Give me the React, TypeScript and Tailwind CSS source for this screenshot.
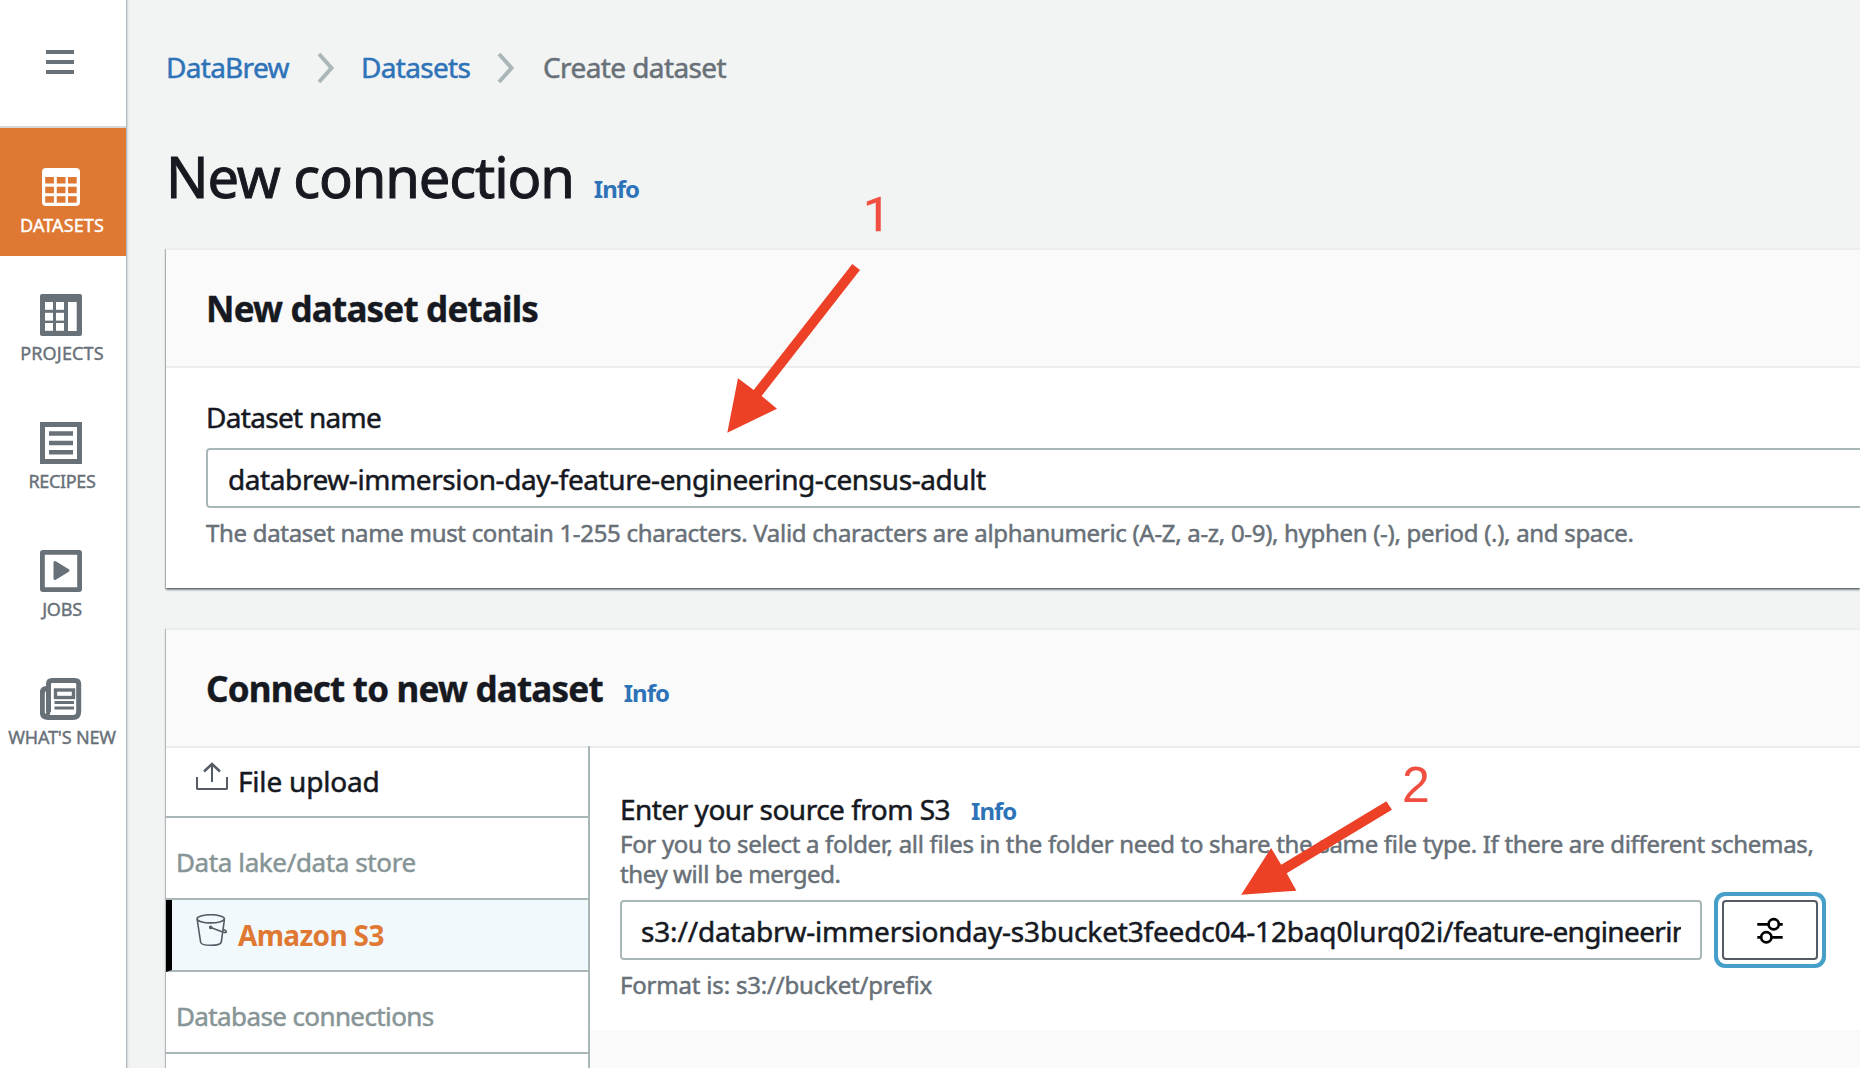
import type { ReactNode } from 'react'

const ink = 'text-[#16191f]'
const hint = 'text-[#687078] [-webkit-text-stroke:0.5px]'

function NavItem({ label, spacing, active, children }: { label: string; spacing: string; active?: boolean; children: ReactNode }) {
  return (
    <a className={`flex h-32 w-full flex-col items-center pt-[38px] ${active ? 'bg-[#df7832] text-white' : 'text-[#687078]'}`}>
      <span className="mr-[4px] flex h-[42px] w-[42px] items-center justify-center">{children}</span>
      <span className={`mr-[2px] mt-[3px] whitespace-nowrap text-[18px] leading-[28px] [-webkit-text-stroke:0.4px] ${spacing}`}>{label}</span>
    </a>
  )
}

function Info({ className }: { className: string }) {
  return <a className={`text-[24px] font-bold tracking-[-1px] text-[#2e73b8] ${className}`}>Info</a>
}

function Chevron({ className }: { className: string }) {
  return (
    <svg className={className} width="18" height="32" viewBox="0 0 18 32" fill="none">
      <path d="M2 2 L14.5 16 L2 30" stroke="#aab7b8" strokeWidth="4" />
    </svg>
  )
}

function DatasetsIcon() {
  return (
    <svg width="42" height="42" viewBox="0 0 42 42">
      <rect x="2" y="2" width="38" height="38" rx="4" fill="#fff" />
      {[11, 20.7, 30.2].map((y) =>
        [5.2, 16.8, 28].map((x) => <rect key={`${x}-${y}`} x={x} y={y} width="8.7" height="6.5" fill="#df7832" />),
      )}
    </svg>
  )
}

function ProjectsIcon() {
  return (
    <svg width="42" height="42" viewBox="0 0 42 42">
      <rect width="42" height="42" rx="2" fill="#687078" />
      {[8, 18.8, 29].map((y) => [5, 16].map((x) => <rect key={`${x}-${y}`} x={x} y={y} width="8" height="7.8" fill="#fff" />))}
      <rect x="28" y="8" width="8.700" height="29" fill="#fff" />
    </svg>
  )
}

function RecipesIcon() {
  return (
    <svg width="42" height="42" viewBox="0 0 42 42">
      <path d="M0 0H42V42H0ZM5 5V37H37V5Z" fill="#687078" fillRule="evenodd" />
      <path d="M9 11.5H33M9 21H33M9 30.3H33" stroke="#687078" strokeWidth="4.6" />
    </svg>
  )
}

function JobsIcon() {
  return (
    <svg width="42" height="42" viewBox="0 0 42 42">
      <rect x="2.4" y="2.4" width="37.2" height="37.2" rx="0.5" fill="none" stroke="#687078" strokeWidth="4.8" strokeLinejoin="round" />
      <path d="M15 12.5V28.5L28 20.5Z" fill="#687078" stroke="#687078" strokeWidth="3" strokeLinejoin="round" />
    </svg>
  )
}

function NewsIcon() {
  return (
    <svg width="42" height="42" viewBox="0 0 42 42" fill="none" stroke="#687078">
      <path d="M8.5 34V6Q8.5 2.5 12 2.5H35Q38.7 2.5 38.7 6V33.5Q38.7 39.5 32.7 39.5H8Q2.3 39.5 2.3 34V15Q2.3 10.5 7 10.5" strokeWidth="5" />
      <path d="M8.5 33Q8.5 37 5.5 38.5" strokeWidth="4" />
      <rect x="15.5" y="12" width="18" height="7.5" strokeWidth="3.4" />
      <path d="M14.5 24.5H34M14.5 30H34" strokeWidth="3.2" />
    </svg>
  )
}

function Arrow({ points, className, width, height, viewBox }: { points: string; className: string; width: number; height: number; viewBox: string }) {
  return (
    <svg className={`pointer-events-none absolute ${className}`} width={width} height={height} viewBox={viewBox}>
      <polygon points={points} fill="#ec4126" />
    </svg>
  )
}

export default function App() {
  return (
    <div className="relative flex h-[1068px] w-[1860px] overflow-hidden bg-[#f2f4f4] font-['Noto_Sans',sans-serif]">
      <nav className="z-10 h-full w-[126px] shrink-0 bg-white shadow-[1px_0_1px_0_#b4b9be,2px_0_2px_0_#d5dadd]">
        <div className="flex h-32 flex-col gap-[6px] border-b-2 border-[#d5d9d9] pl-[46px] pt-[50px]">
          <span className="h-1 w-7 bg-[#687078]" />
          <span className="h-1 w-7 bg-[#687078]" />
          <span className="h-1 w-7 bg-[#687078]" />
        </div>
        <NavItem label="DATASETS" spacing="tracking-[0.12px]" active><DatasetsIcon /></NavItem>
        <NavItem label="PROJECTS" spacing="tracking-[0.15px]"><ProjectsIcon /></NavItem>
        <NavItem label="RECIPES" spacing="tracking-[-0.35px]"><RecipesIcon /></NavItem>
        <NavItem label="JOBS" spacing="tracking-[-0.22px]"><JobsIcon /></NavItem>
        <NavItem label="WHAT'S NEW" spacing="tracking-[-0.18px]"><NewsIcon /></NavItem>
      </nav>

      <main className="flex w-[1734px] shrink-0 flex-col pl-10">
        <div className="mt-[47px] flex h-10 items-center whitespace-nowrap text-[28px] leading-[40px] [-webkit-text-stroke:0.5px]">
          <a className="w-[149px] tracking-[-0.71px] text-[#2e73b8]">DataBrew</a>
          <Chevron className="mt-[2px] w-[46px] shrink-0 -translate-x-[12px]" />
          <a className="w-[134px] tracking-[-0.68px] text-[#2e73b8]">Datasets</a>
          <Chevron className="mt-[2px] w-[48px] shrink-0 -translate-x-[13px]" />
          <span className="tracking-[-0.6px] text-[#687078]">Create dataset</span>
        </div>

        <div className="mt-[49px] flex h-20 items-baseline whitespace-nowrap leading-[80px]">
          <h1 className={`text-[56px] tracking-[-1.1px] [-webkit-text-stroke:1px] ${ink}`}>New connection</h1>
          <Info className="ml-[20px]" />
        </div>

        <section className="mt-[32px] h-[340px] shrink-0 border-t-2 border-[#eaeded] bg-white shadow-[0_2px_1px_-1px_#687078,0_2px_2px_0_#879596,-1px_1px_1px_0_#b8bfc2]">
          <header className="flex h-[118px] items-center border-b-2 border-[#eaeded] bg-[#fafafa] pl-10">
            <h2 className={`pt-[2px] text-[35px] font-bold leading-[48px] tracking-[-0.8px] [-webkit-text-stroke:0.4px] ${ink}`}>New dataset details</h2>
          </header>
          <div className="flex flex-col whitespace-nowrap pl-10 pt-[29px]">
            <label className={`text-[28px] leading-[40px] tracking-[-0.7px] [-webkit-text-stroke:0.5px] ${ink}`}>Dataset name</label>
            <div className={`mt-[11px] h-[60px] w-[1800px] rounded-[4px] border-2 border-[#aab7b8] pl-5 text-[28px] leading-[58px] tracking-[-0.417px] [-webkit-text-stroke:0.5px] ${ink}`}>
              databrew-immersion-day-feature-engineering-census-adult
            </div>
            <p className={`mt-[10px] text-[24px] leading-[30px] tracking-[-0.309px] ${hint}`}>
              The dataset name must contain 1-255 characters. Valid characters are alphanumeric (A-Z, a-z, 0-9), hyphen (-), period (.), and space.
            </p>
          </div>
        </section>

        <section className="mt-10 h-[500px] shrink-0 border-t-2 border-[#eaeded] bg-white shadow-[-1px_1px_1px_0_#b0b7bb]">
          <header className="flex h-[118px] items-baseline whitespace-nowrap border-b-2 border-[#eaeded] bg-[#fafafa] pl-10 pt-[35px]">
            <h2 className={`text-[35px] font-bold leading-[48px] tracking-[-0.79px] [-webkit-text-stroke:0.4px] ${ink}`}>Connect to new dataset</h2>
            <Info className="ml-[21px]" />
          </header>
          <div className="flex">
            <aside className="-mt-[2px] h-[400px] w-[424px] shrink-0 whitespace-nowrap border-r-2 border-[#aab7b8] pt-[2px]">
              <div className="flex h-[70px] items-start border-b-2 border-[#aab7b8] pl-[30px] pt-[13px]">
                <svg width="32" height="32" viewBox="0 0 32 32" fill="none" stroke="#545b64" strokeWidth="2">
                  <path d="M1 16V27.500Q1 28 2 28H30Q31 28 31 27.500V16M16 21V3" />
                  <path d="M8 10.500L16 3L24 10.500" strokeWidth="2.500" />
                </svg>
                <span className={`ml-[10px] text-[28px] leading-[40px] tracking-[-0.2px] [-webkit-text-stroke:0.5px] ${ink}`}>File upload</span>
              </div>
              <div className="h-[82px] border-b-2 border-[#aab7b8] pl-[10px] pt-[24px] text-[26px] leading-[40px] tracking-[-0.39px] text-[#879596] [-webkit-text-stroke:0.5px]">
                Data lake/data store
              </div>
              <div className="flex h-[72px] items-start border-b-2 border-l-[6px] border-b-[#aab7b8] border-l-black bg-[#f2f9fc] pl-[24px] pt-[14px]">
                <svg width="32" height="34" viewBox="0 0 32 34" fill="none" stroke="#545b64" strokeWidth="1.600">
                  <ellipse cx="14.700" cy="4.800" rx="13.700" ry="4.100" />
                  <path d="M1.200 5.500L4.600 28Q5 31.300 14.700 31.300Q24.500 31.300 25.300 28L28.400 5.500M14.700 13.500L26 17.800Q30.500 19.500 30.300 17.500Q30 16 27.200 15.200" />
                  <circle cx="14.700" cy="13.400" r="1" fill="#545b64" />
                </svg>
                <span className="ml-[10px] mt-px text-[28px] font-bold leading-[40px] tracking-[-0.66px] text-[#df7832]">Amazon S3</span>
              </div>
              <div className="h-[82px] border-b-2 border-[#aab7b8] pl-[10px] pt-[24px] text-[26px] leading-[40px] tracking-[-0.614px] text-[#879596] [-webkit-text-stroke:0.5px]">
                Database connections
              </div>
            </aside>
            <div className="flex w-[1270px] flex-col">
              <div className="h-[282px] whitespace-nowrap pl-[30px] pt-[41px]">
                <div className="flex h-10 items-baseline leading-[40px]">
                  <span className={`text-[28px] tracking-[-0.5px] [-webkit-text-stroke:0.5px] ${ink}`}>Enter your source from S3</span>
                  <Info className="ml-[21px]" />
                </div>
                <p className={`h-[60px] text-[24px] leading-[30px] ${hint}`}>
                  <span className="tracking-[-0.309px]">For you to select a folder, all files in the folder need to share the same file type. If there are different schemas,</span>
                  <br />
                  <span className="tracking-[-0.39px]">they will be merged.</span>
                </p>
                <div className="mt-[11px] flex">
                  <div className="h-[60px] w-[1082px] rounded-[4px] border-2 border-[#aab7b8] px-[19px]">
                    <div className={`h-[56px] overflow-hidden text-[28px] leading-[58px] tracking-[-0.174px] [-webkit-text-stroke:0.5px] ${ink}`}>
                      s3://databrw-immersionday-s3bucket3feedc04-12baq0lurq02i/<span className="tracking-[-0.65px]">feature-engineering</span>
                    </div>
                  </div>
                  <button className="ml-5 flex h-[60px] w-24 items-center justify-center rounded-[4px] border-2 border-[#545b64] bg-white shadow-[0_0_0_4px_#fff,0_0_0_8px_#469fc8]">
                    <svg width="28" height="28" viewBox="0 0 28 28" fill="none" stroke="#000" strokeWidth="2.700">
                      <circle cx="17.700" cy="8.300" r="5.100" />
                      <circle cx="10.300" cy="21.300" r="5.100" />
                      <path d="M1.300 8.300H12.600M22.800 8.300H26.700M1.300 21.300H5.200M15.400 21.300H26.700" />
                    </svg>
                  </button>
                </div>
                <p className={`mt-[10px] text-[24px] leading-[30px] tracking-[-0.19px] ${hint}`}>Format is: s3://bucket/prefix</p>
              </div>
              <div className="h-[60px] bg-[#fafafa]" />
            </div>
          </div>
        </section>
      </main>

      <Arrow className="left-[720px] top-[260px] z-20" width={150} height={180} viewBox="720 260 150 180" points="852.3,264 860,270 761.7,396 777,408.7 727.3,432.7 738,378.3 753.7,390" />
      <Arrow className="left-[1236px] top-[796px] z-20" width={160} height={104} viewBox="1236 796 160 104" points="1386.4,801.3 1391.9,809.7 1286.7,873.3 1296.4,890.7 1241.2,894.7 1271.1,848 1281.2,864.7" />
      <span className="absolute left-[863px] top-[185px] z-20 font-['Roboto'] text-[49px] leading-[60px] text-[#f04e40] [-webkit-text-stroke:0.5px]">1</span>
      <span className="absolute left-[1402px] top-[755px] z-20 font-['Liberation_Sans'] text-[50px] leading-[60px] text-[#f04e40]">2</span>
    </div>
  )
}
